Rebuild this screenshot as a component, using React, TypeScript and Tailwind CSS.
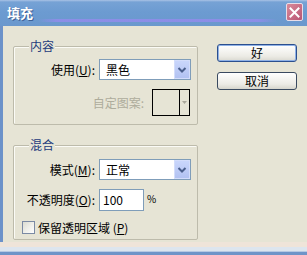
import React from "react";

const font = "font-['Noto_Sans_CJK_SC','Noto_Sans',sans-serif]";

function Chevron() {
  return (
    <svg width="10" height="8" viewBox="0 0 10 8">
      <polyline points="1.5,2 5,5.5 8.5,2" fill="none" stroke="#4a5f8c" strokeWidth="2" />
    </svg>
  );
}

function Select({ value }: { value: string }) {
  return (
    <div className="w-[92px] h-[21px] border border-[#7f9db9] bg-white flex items-center">
      <span className="pl-[6px] text-[12px] leading-none text-black flex-1">{value}</span>
      <div className="w-[16px] h-[19px] bg-[linear-gradient(to_bottom,#c9d6fb,#b2c2f2)] border border-[#d3ddfb] flex items-center justify-center">
        <Chevron />
      </div>
    </div>
  );
}

function U({ c }: { c: string }) {
  return <span className="underline underline-offset-[1px]">{c}</span>;
}

export default function App() {
  return (
    <div className={`w-[307px] h-[255px] overflow-hidden flex flex-col bg-[#e6e4d5] ${font} text-black`}>
      {/* Title bar */}
      <div className="relative h-[26px] shrink-0 bg-[linear-gradient(to_bottom,#a9c3e6_0px,#76a2d5_2px,#6c9bd1_12px,#6a98cd_26px)] flex items-center pl-[7px] pr-[4px]">
        <div className="absolute left-[38px] right-[30px] top-[19px] h-[3px] bg-[linear-gradient(to_right,rgba(140,140,235,0),rgba(145,140,235,0.85)_8%,rgba(145,140,235,0.85)_92%,rgba(140,140,235,0))]" />
        <span className="relative text-white font-bold text-[13px] leading-none mt-[-1px] [text-shadow:1px_1px_0_#3d5f95]">填充</span>
        <div className="relative ml-auto w-[17px] h-[18px] mt-[-2px] rounded-[2px] border border-[#e8dde8] bg-[linear-gradient(135deg,#d98a9a,#b95574)] flex items-center justify-center">
          <svg width="11" height="11" viewBox="0 0 11 11">
            <path d="M1.5 1.5 L9.5 9.5 M9.5 1.5 L1.5 9.5" stroke="white" strokeWidth="2" strokeLinecap="square" />
          </svg>
        </div>
      </div>

      {/* Body */}
      <div className="flex-1 flex border-l-[3px] border-[#6c92c9]">
        <div className="pl-[10px] pt-[20px] flex flex-col gap-[20px]">
          {/* Group 1 */}
          <div className="relative w-[185px] h-[79px] border border-[#bdbbab] rounded-[2px] shadow-[inset_1px_1px_0_#fbfbf6] pt-[12px] pr-[6px]">
            <span className="absolute left-[15px] top-[-9px] px-[1px] bg-[#e6e4d5] text-[12px] leading-[16px] text-[#1d3b7c]">内容</span>
            <div className="flex items-center">
              <span className="w-[81px] text-right text-[12px] leading-none">使用(<U c="U" />):</span>
              <div className="ml-[4px]"><Select value="黑色" /></div>
            </div>
            <div className="flex items-center justify-end mt-[9px] pr-[1px]">
              <span className="text-[12px] leading-none text-[#aeac9c]">自定图案:</span>
              <div className="ml-[8px] w-[38px] h-[27px] border border-black flex">
                <div className="flex-1" />
                <div className="w-[10px] border-l border-black flex items-center justify-center">
                  <svg width="5" height="3" viewBox="0 0 5 3"><polygon points="0,0 5,0 2.5,3" fill="#a9a79a" /></svg>
                </div>
              </div>
            </div>
          </div>

          {/* Group 2 */}
          <div className="relative w-[185px] h-[95px] border border-[#bdbbab] rounded-[2px] shadow-[inset_1px_1px_0_#fbfbf6] pt-[13px]">
            <span className="absolute left-[15px] top-[-9px] px-[1px] bg-[#e6e4d5] text-[12px] leading-[16px] text-[#1d3b7c]">混合</span>
            <div className="flex items-center">
              <span className="w-[81px] text-right text-[12px] leading-none">模式(<U c="M" />):</span>
              <div className="ml-[4px]"><Select value="正常" /></div>
            </div>
            <div className="flex items-center mt-[9px]">
              <span className="w-[81px] text-right text-[12px] leading-none whitespace-nowrap">不透明度(<U c="O" />):</span>
              <div className="ml-[4px] w-[45px] h-[22px] border border-[#7f9db9] bg-white flex items-center pl-[3px] text-[12px] leading-none">100</div>
              <span className="ml-[3px] text-[10px] leading-none mt-[-2px]">%</span>
            </div>
            <div className="flex items-center mt-[10px] pl-[8px]">
              <div className="w-[13px] h-[13px] border border-[#7b8aa4] bg-[linear-gradient(135deg,#dcdcd2,#ffffff)]" />
              <span className="ml-[3px] text-[12px] leading-none">保留透明区域 (<U c="P" />)</span>
            </div>
          </div>
        </div>

        {/* Buttons */}
        <div className="pl-[19px] pt-[18px] flex flex-col gap-[10px]">
          <button className="w-[80px] h-[18px] rounded-[3px] border border-[#2b4f8e] bg-[linear-gradient(to_bottom,#ffffff,#ecebe5_70%,#d9d8d0)] shadow-[inset_0_0_0_1px_#8fb1e6] flex items-center justify-center text-[12px] leading-none">好</button>
          <button className="w-[80px] h-[18px] rounded-[3px] border border-[#3a4a60] bg-[linear-gradient(to_bottom,#ffffff,#ecebe5_70%,#d6d5cc)] flex items-center justify-center text-[12px] leading-none">取消</button>
        </div>
      </div>

      {/* Bottom edge */}
      <div className="h-[5px] shrink-0 bg-[#efe4d9]" />
      <div className="h-[4px] shrink-0 bg-[#dde5ee]" />
      <div className="h-[1px] shrink-0 bg-[#b7c9e3]" />
      <div className="h-[3px] shrink-0 bg-[#6f94c8]" />
    </div>
  );
}
